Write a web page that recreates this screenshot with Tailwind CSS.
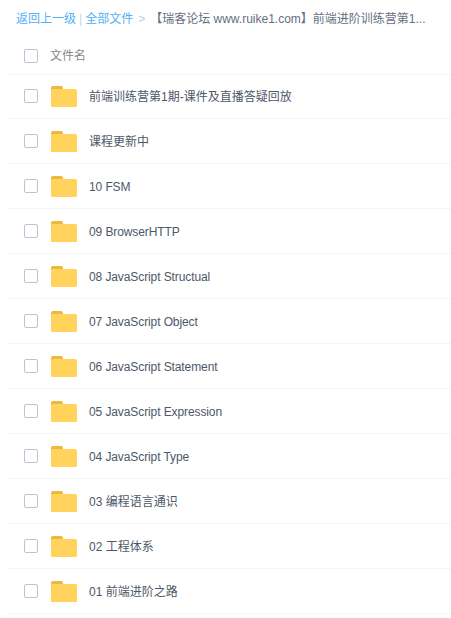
<!DOCTYPE html>
<html>

<head>
    <title>全部文件</title>
    <meta charset="UTF-8" />
    <meta name="viewport" content="width=device-width, initial-scale=1.0" />
    <script src="https://cdn.jsdelivr.net/npm/@tailwindcss/browser@4"></script>
</head>

<body class="bg-white overflow-hidden font-['Liberation_Sans','Noto_Sans_CJK_SC',sans-serif] text-[12px]">
    <div class="flex items-center h-[37px] pl-4 whitespace-nowrap">
        <span class="text-[#4fb0f5]">返回上一级</span>
        <span class="text-[#c5d8e8] mx-[3px]">|</span>
        <span class="text-[#4fb0f5]">全部文件</span>
        <span class="text-[#c4ccd6] ml-[5px] mr-[5px]">&gt;</span>
        <span class="text-[#666f80]">【瑞客论坛 www.ruike1.com】前端进阶训练营第1...</span>
    </div>

    <div class="ml-2 flex items-center h-[38px] pl-4 border-b border-[#f3f6f9]">
        <span class="w-[14px] h-[14px] border border-[#b9c5d3] rounded-[2px]"></span>
        <span class="ml-[12px] text-[#888]">文件名</span>
    </div>

    <div class="ml-2">
        <div class="flex items-center h-[44px] pb-px pl-4 border-b border-[#f1f6fc]">
            <span class="w-[14px] h-[14px] border border-[#b9c5d3] rounded-[2px]"></span>
            <svg class="ml-[13px]" width="26" height="21" viewBox="0 0 26 21"><path d="M0 2a2 2 0 0 1 2-2h8a2 2 0 0 1 2 2v2H0z" fill="#ecb93f"/><rect y="3" width="26" height="18" rx="1.5" fill="#ffd35c"/></svg>
            <span class="ml-[12px] pt-[2px] text-[#4d5768]">前端训练营第1期-课件及直播答疑回放</span>
        </div>
        <div class="flex items-center h-[45px] pl-4 border-b border-[#f1f6fc]">
            <span class="w-[14px] h-[14px] border border-[#b9c5d3] rounded-[2px]"></span>
            <svg class="ml-[13px]" width="26" height="21" viewBox="0 0 26 21"><path d="M0 2a2 2 0 0 1 2-2h8a2 2 0 0 1 2 2v2H0z" fill="#ecb93f"/><rect y="3" width="26" height="18" rx="1.5" fill="#ffd35c"/></svg>
            <span class="ml-[12px] pt-[2px] text-[#4d5768]">课程更新中</span>
        </div>
        <div class="flex items-center h-[45px] pl-4 border-b border-[#f1f6fc]">
            <span class="w-[14px] h-[14px] border border-[#b9c5d3] rounded-[2px]"></span>
            <svg class="ml-[13px]" width="26" height="21" viewBox="0 0 26 21"><path d="M0 2a2 2 0 0 1 2-2h8a2 2 0 0 1 2 2v2H0z" fill="#ecb93f"/><rect y="3" width="26" height="18" rx="1.5" fill="#ffd35c"/></svg>
            <span class="ml-[12px] pt-[2px] text-[#4d5768] tracking-[-0.1px]">10 FSM</span>
        </div>
        <div class="flex items-center h-[45px] pl-4 border-b border-[#f1f6fc]">
            <span class="w-[14px] h-[14px] border border-[#b9c5d3] rounded-[2px]"></span>
            <svg class="ml-[13px]" width="26" height="21" viewBox="0 0 26 21"><path d="M0 2a2 2 0 0 1 2-2h8a2 2 0 0 1 2 2v2H0z" fill="#ecb93f"/><rect y="3" width="26" height="18" rx="1.5" fill="#ffd35c"/></svg>
            <span class="ml-[12px] pt-[2px] text-[#4d5768] tracking-[-0.1px]">09 BrowserHTTP</span>
        </div>
        <div class="flex items-center h-[45px] pl-4 border-b border-[#f1f6fc]">
            <span class="w-[14px] h-[14px] border border-[#b9c5d3] rounded-[2px]"></span>
            <svg class="ml-[13px]" width="26" height="21" viewBox="0 0 26 21"><path d="M0 2a2 2 0 0 1 2-2h8a2 2 0 0 1 2 2v2H0z" fill="#ecb93f"/><rect y="3" width="26" height="18" rx="1.5" fill="#ffd35c"/></svg>
            <span class="ml-[12px] pt-[2px] text-[#4d5768] tracking-[-0.1px]">08 JavaScript Structual</span>
        </div>
        <div class="flex items-center h-[45px] pl-4 border-b border-[#f1f6fc]">
            <span class="w-[14px] h-[14px] border border-[#b9c5d3] rounded-[2px]"></span>
            <svg class="ml-[13px]" width="26" height="21" viewBox="0 0 26 21"><path d="M0 2a2 2 0 0 1 2-2h8a2 2 0 0 1 2 2v2H0z" fill="#ecb93f"/><rect y="3" width="26" height="18" rx="1.5" fill="#ffd35c"/></svg>
            <span class="ml-[12px] pt-[2px] text-[#4d5768] tracking-[-0.1px]">07 JavaScript Object</span>
        </div>
        <div class="flex items-center h-[45px] pl-4 border-b border-[#f1f6fc]">
            <span class="w-[14px] h-[14px] border border-[#b9c5d3] rounded-[2px]"></span>
            <svg class="ml-[13px]" width="26" height="21" viewBox="0 0 26 21"><path d="M0 2a2 2 0 0 1 2-2h8a2 2 0 0 1 2 2v2H0z" fill="#ecb93f"/><rect y="3" width="26" height="18" rx="1.5" fill="#ffd35c"/></svg>
            <span class="ml-[12px] pt-[2px] text-[#4d5768] tracking-[-0.1px]">06 JavaScript Statement</span>
        </div>
        <div class="flex items-center h-[45px] pl-4 border-b border-[#f1f6fc]">
            <span class="w-[14px] h-[14px] border border-[#b9c5d3] rounded-[2px]"></span>
            <svg class="ml-[13px]" width="26" height="21" viewBox="0 0 26 21"><path d="M0 2a2 2 0 0 1 2-2h8a2 2 0 0 1 2 2v2H0z" fill="#ecb93f"/><rect y="3" width="26" height="18" rx="1.5" fill="#ffd35c"/></svg>
            <span class="ml-[12px] pt-[2px] text-[#4d5768] tracking-[-0.1px]">05 JavaScript Expression</span>
        </div>
        <div class="flex items-center h-[45px] pl-4 border-b border-[#f1f6fc]">
            <span class="w-[14px] h-[14px] border border-[#b9c5d3] rounded-[2px]"></span>
            <svg class="ml-[13px]" width="26" height="21" viewBox="0 0 26 21"><path d="M0 2a2 2 0 0 1 2-2h8a2 2 0 0 1 2 2v2H0z" fill="#ecb93f"/><rect y="3" width="26" height="18" rx="1.5" fill="#ffd35c"/></svg>
            <span class="ml-[12px] pt-[2px] text-[#4d5768] tracking-[-0.1px]">04 JavaScript Type</span>
        </div>
        <div class="flex items-center h-[45px] pl-4 border-b border-[#f1f6fc]">
            <span class="w-[14px] h-[14px] border border-[#b9c5d3] rounded-[2px]"></span>
            <svg class="ml-[13px]" width="26" height="21" viewBox="0 0 26 21"><path d="M0 2a2 2 0 0 1 2-2h8a2 2 0 0 1 2 2v2H0z" fill="#ecb93f"/><rect y="3" width="26" height="18" rx="1.5" fill="#ffd35c"/></svg>
            <span class="ml-[12px] pt-[2px] text-[#4d5768]">03 编程语言通识</span>
        </div>
        <div class="flex items-center h-[45px] pl-4 border-b border-[#f1f6fc]">
            <span class="w-[14px] h-[14px] border border-[#b9c5d3] rounded-[2px]"></span>
            <svg class="ml-[13px]" width="26" height="21" viewBox="0 0 26 21"><path d="M0 2a2 2 0 0 1 2-2h8a2 2 0 0 1 2 2v2H0z" fill="#ecb93f"/><rect y="3" width="26" height="18" rx="1.5" fill="#ffd35c"/></svg>
            <span class="ml-[12px] pt-[2px] text-[#4d5768]">02 工程体系</span>
        </div>
        <div class="flex items-center h-[45px] pl-4 border-b border-[#f1f6fc]">
            <span class="w-[14px] h-[14px] border border-[#b9c5d3] rounded-[2px]"></span>
            <svg class="ml-[13px]" width="26" height="21" viewBox="0 0 26 21"><path d="M0 2a2 2 0 0 1 2-2h8a2 2 0 0 1 2 2v2H0z" fill="#ecb93f"/><rect y="3" width="26" height="18" rx="1.5" fill="#ffd35c"/></svg>
            <span class="ml-[12px] pt-[2px] text-[#4d5768]">01 前端进阶之路</span>
        </div>
    </div>
</body>

</html>
